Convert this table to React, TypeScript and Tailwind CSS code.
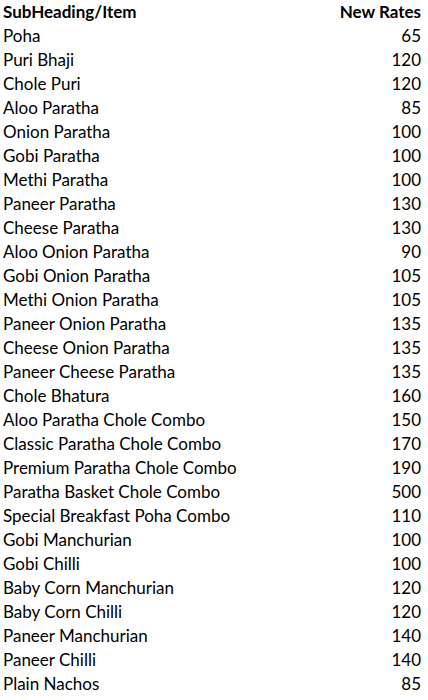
const items: [string, number][] = [
  ["Poha", 65],
  ["Puri Bhaji", 120],
  ["Chole Puri", 120],
  ["Aloo Paratha", 85],
  ["Onion Paratha", 100],
  ["Gobi Paratha", 100],
  ["Methi Paratha", 100],
  ["Paneer Paratha", 130],
  ["Cheese Paratha", 130],
  ["Aloo Onion Paratha", 90],
  ["Gobi Onion Paratha", 105],
  ["Methi Onion Paratha", 105],
  ["Paneer Onion Paratha", 135],
  ["Cheese Onion Paratha", 135],
  ["Paneer Cheese Paratha", 135],
  ["Chole Bhatura", 160],
  ["Aloo Paratha Chole Combo", 150],
  ["Classic Paratha Chole Combo", 170],
  ["Premium Paratha Chole Combo", 190],
  ["Paratha Basket Chole Combo", 500],
  ["Special Breakfast Poha Combo", 110],
  ["Gobi Manchurian", 100],
  ["Gobi Chilli", 100],
  ["Baby Corn Manchurian", 120],
  ["Baby Corn Chilli", 120],
  ["Paneer Manchurian", 140],
  ["Paneer Chilli", 140],
  ["Plain Nachos", 85],
];

export default function App() {
  return (
    <div className="w-[428px] h-[700px] bg-white text-black font-['Lato',sans-serif] text-[17px] leading-[24px] pl-[3px] pr-[7px] overflow-hidden">
      <div className="flex justify-between font-bold">
        <span>SubHeading/Item</span>
        <span>New Rates</span>
      </div>
      {items.map(([name, rate]) => (
        <div key={name} className="flex justify-between">
          <span>{name}</span>
          <span>{rate}</span>
        </div>
      ))}
    </div>
  );
}
